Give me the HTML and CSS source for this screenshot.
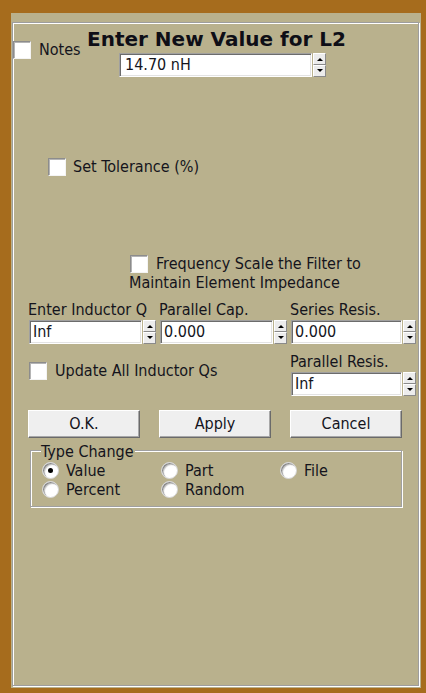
FILE: index.html
```html
<!DOCTYPE html>
<html>
<head>
<meta charset="utf-8">
<link rel="stylesheet" href="styles.css">
</head>
<body>
<div class="frame">
  <div class="group">
    <div class="header">
      <div class="chk notes"><span class="box"></span><span>Notes</span></div>
      <div class="titleblock">
        <div class="title">Enter New Value for L2</div>
        <div class="field main">
          <div class="input">14.70 nH</div>
          <div class="spin"><span class="up"></span><span class="down"></span></div>
        </div>
      </div>
    </div>

    <div class="chk tol"><span class="box"></span><span>Set Tolerance (%)</span></div>

    <div class="freq">
      <div class="chk line1"><span class="box"></span><span>Frequency Scale the Filter to</span></div>
      <div class="line2">Maintain Element Impedance</div>
    </div>

    <div class="grid3 fields">
      <div class="cell">
        <div class="lbl">Enter Inductor Q</div>
        <div class="field"><div class="input">Inf</div><div class="spin"><span class="up"></span><span class="down"></span></div></div>
      </div>
      <div class="cell">
        <div class="lbl">Parallel Cap.</div>
        <div class="field"><div class="input">0.000</div><div class="spin"><span class="up"></span><span class="down"></span></div></div>
      </div>
      <div class="cell col3">
        <div class="lbl">Series Resis.</div>
        <div class="field"><div class="input">0.000</div><div class="spin"><span class="up"></span><span class="down"></span></div></div>
      </div>
    </div>

    <div class="grid3 row2">
      <div class="chk update"><span class="box"></span><span>Update All Inductor Qs</span></div>
      <div class="cell col3">
        <div class="lbl">Parallel Resis.</div>
        <div class="field"><div class="input">Inf</div><div class="spin"><span class="up"></span><span class="down"></span></div></div>
      </div>
    </div>

    <div class="grid3 buttons">
      <div class="btn">O.K.</div>
      <div class="btn">Apply</div>
      <div class="btn">Cancel</div>
    </div>

    <div class="typebox">
      <div class="legend"><span>Type Change</span></div>
      <div class="radios">
        <div class="radio"><span class="circ on"></span><span>Value</span></div>
        <div class="radio"><span class="circ"></span><span>Part</span></div>
        <div class="radio"><span class="circ"></span><span>File</span></div>
        <div class="radio"><span class="circ"></span><span>Percent</span></div>
        <div class="radio"><span class="circ"></span><span>Random</span></div>
      </div>
    </div>
  </div>
</div>
</body>
</html>
```

FILE: styles.css
```css
* { box-sizing: border-box; }

body {
  margin: 0;
  background: #a66c1d;
  font-family: "DejaVu Sans Condensed", "Liberation Sans", sans-serif;
  font-size: 16px;
  color: #14141c;
}

.frame {
  margin: 13px 5px 0 11px;
  height: 675px;
  background: #b9b18d;
  padding: 9px 2px 0 1px;
}

.group {
  height: 664px;
  border: 1px solid #9d9d9d;
  box-shadow: inset 1px 1px 0 #fff, 1px 1px 0 #fff;
}

/* checkbox */
.chk {
  display: flex;
  align-items: center;
  gap: 8px;
  line-height: 18px;
  white-space: nowrap;
}
.box {
  flex: none;
  width: 18px;
  height: 18px;
  background: #fff;
  border: 1px solid;
  border-color: #8c8c8c #f4f4f4 #f4f4f4 #8c8c8c;
  box-shadow: inset 1px 1px 0 #b4b4b4;
}

/* header */
.header {
  display: flex;
  align-items: flex-start;
}
.notes {
  width: 74px;
  margin-top: 18px;
}
.titleblock {
  margin-top: 4px;
}
.title {
  font-family: "DejaVu Sans", sans-serif;
  font-weight: bold;
  font-size: 20px;
  line-height: 24px;
  color: #0e0e16;
}

/* spin fields */
.field {
  display: flex;
  gap: 1px;
  height: 24px;
}
.input {
  width: 113px;
  height: 24px;
  background: #fff;
  border: 1px solid;
  border-color: #a0a0a0 #ffffff #ffffff #a0a0a0;
  box-shadow: inset 1px 1px 0 #6c6c6c, inset -1px -1px 0 #e3e3e3;
  padding-left: 3px;
  line-height: 22px;
}
.main {
  margin: 2px 0 0 32px;
}
.main .input {
  width: 193px;
  padding-left: 5px;
}
.col3 .input {
  width: 111px;
}
.spin {
  width: 13px;
  display: flex;
  flex-direction: column;
}
.spin span {
  flex: 1;
  position: relative;
  background: #ececec;
  border: 1px solid;
  border-color: #ffffff #8a8a8a #8a8a8a #ffffff;
}
.spin span::after {
  content: "";
  position: absolute;
  left: 3px;
  top: 4px;
  border-left: 3px solid transparent;
  border-right: 3px solid transparent;
}
.spin .up::after { border-bottom: 3px solid #000; }
.spin .down::after { border-top: 3px solid #000; top: 3px; }

/* tolerance */
.tol {
  margin: 81px 0 0 35px;
  gap: 7px;
}

/* frequency scale */
.freq {
  margin: 78px 0 0 116px;
  line-height: 19px;
}
.freq .line1 {
  padding-left: 1px;
  height: 19px;
  line-height: 19px;
}

/* grid */
.grid3 {
  display: grid;
  grid-template-columns: repeat(3, 131px);
  padding-left: 15px;
}
.lbl {
  line-height: 16px;
  white-space: nowrap;
}
.cell .field {
  margin: 2px 0 0 1px;
}
.fields {
  margin-top: 10px;
}
.row2 {
  margin-top: 10px;
}
.update {
  grid-column: 1 / span 2;
  align-self: start;
  margin: 8px 0 0 1px;
}
.col3 {
  grid-column: 3;
}

/* buttons */
.buttons {
  margin-top: 14px;
}
.btn {
  width: 112px;
  height: 28px;
  background: #efefef;
  border: 1px solid;
  border-color: #ffffff #6a6a6a #6a6a6a #ffffff;
  box-shadow: inset -1px -1px 0 #a8a8a8;
  text-align: center;
  line-height: 26px;
}

/* type change group */
.typebox {
  margin: 12px 0 0 17px;
  width: 372px;
  height: 57px;
  border: 1px solid #a0a0a0;
  box-shadow: inset 1px 1px 0 #fff, 1px 1px 0 #fff;
}
.legend {
  margin-top: -6px;
  padding-left: 10px;
  line-height: 14px;
  height: 14px;
}
.legend span {
  background: #b9b18d;
  padding: 0 1px 0 0;
}
.radios {
  margin-top: 2px;
  display: grid;
  grid-template-columns: repeat(3, 119px);
  grid-auto-rows: 19px;
  padding-left: 11px;
}
.radio {
  display: flex;
  align-items: center;
  gap: 7px;
  white-space: nowrap;
}
.circ {
  flex: none;
  width: 17px;
  height: 17px;
  border-radius: 50%;
  background: #fff;
  border: 1px solid #d6d6d6;
  box-shadow: inset 1px 1px 0 #8a8a8a, inset 2px 2px 1px #c4c4c4;
  position: relative;
}
.circ.on::after {
  content: "";
  position: absolute;
  left: 5px;
  top: 5px;
  width: 5px;
  height: 5px;
  border-radius: 50%;
  background: #000;
}
```
